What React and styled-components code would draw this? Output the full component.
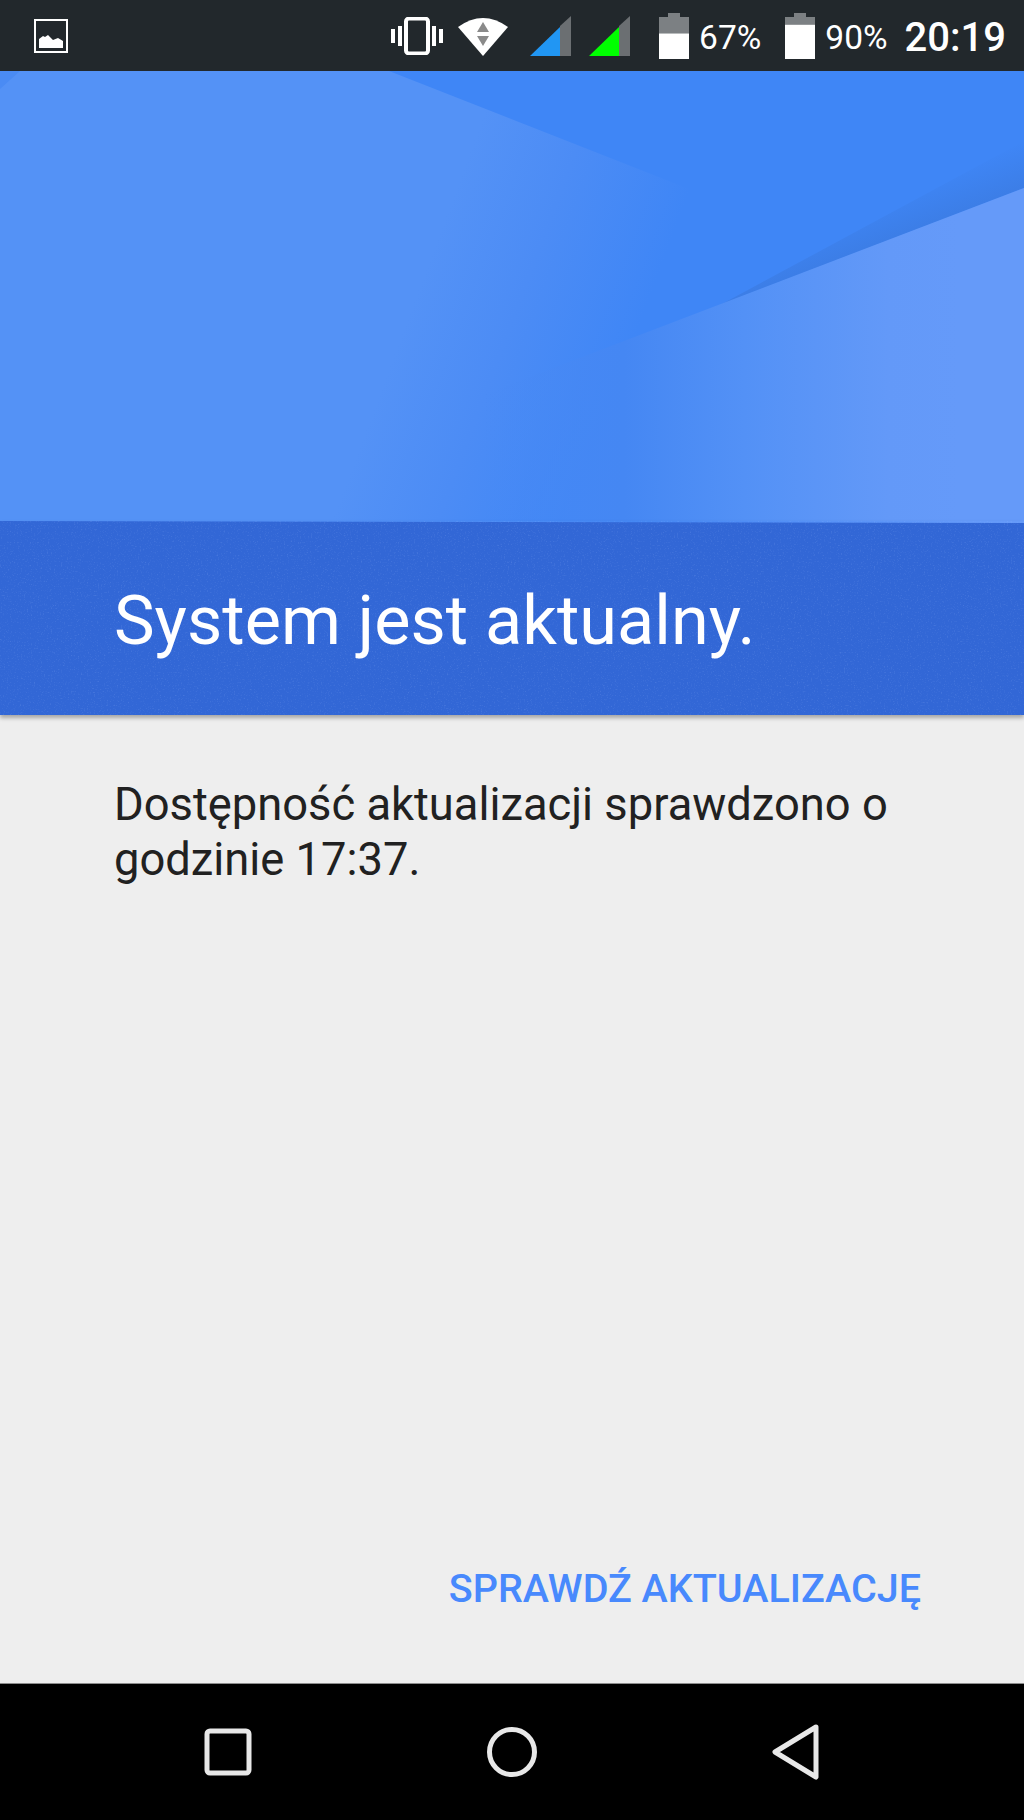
import React from "react";
import styled, { createGlobalStyle } from "styled-components";

const GlobalStyle = createGlobalStyle`
  html, body {
    margin: 0;
    padding: 0;
    background: #eeeeee;
  }
  #root {
    height: 1820px;
  }
`;

const App = () => {
  return (
    <Page>
      <GlobalStyle />
      <StatusBar>
        <PictureIcon />
        <StatusRight>
          <VibrateIcon />
          <WifiIcon />
          <SignalIcon color="#2196f3" $left={22} />
          <SignalIcon color="#00ff00" $left={18} />
          <BatteryIcon level={67} $left={29} />
          <Percent>67%</Percent>
          <BatteryIcon level={90} $left={24} />
          <Percent>90%</Percent>
          <Clock>20:19</Clock>
        </StatusRight>
      </StatusBar>

      <Hero>
        <HeroArt />
      </Hero>

      <Banner>
        <Grain />
        <Title>System jest aktualny.</Title>
      </Banner>

      <Content>
        <Message>
          Dostępność aktualizacji sprawdzono o
          <br />
          godzinie 17:37.
        </Message>
        <Actions>
          <CheckButton>SPRAWDŹ AKTUALIZACJĘ</CheckButton>
        </Actions>
      </Content>

      <NavBar>
        <NavIcon viewBox="0 0 50 56" $first>
          <rect x="4" y="7" width="42" height="42" rx="3" />
        </NavIcon>
        <NavIcon viewBox="0 0 50 56">
          <circle cx="25" cy="28" r="22.5" />
        </NavIcon>
        <NavIcon viewBox="0 0 50 56">
          <path d="M45 3 L4 28 L45 53 Z" />
        </NavIcon>
      </NavBar>
    </Page>
  );
};

export default App;

const PictureIcon = () => (
  <PictureSvg viewBox="0 0 34 34">
    <rect x="1" y="1" width="32" height="32" fill="none" stroke="#fff" strokeWidth="2" />
    <path d="M5 29 V20 L9 17 L11 18 L14 16 L19 21 L24 19 L29 22 V29 Z" fill="#fff" />
  </PictureSvg>
);

const VibrateIcon = () => (
  <VibrateSvg viewBox="0 0 52 38">
    <rect x="15" y="1.5" width="22" height="35" rx="3" fill="none" stroke="#fff" strokeWidth="4" />
    <rect x="7" y="9" width="4" height="20" fill="#fff" />
    <rect x="41" y="9" width="4" height="20" fill="#fff" />
    <rect x="0" y="12" width="4" height="14" fill="#fff" />
    <rect x="48" y="12" width="4" height="14" fill="#fff" />
  </VibrateSvg>
);

const WifiIcon = () => (
  <WifiSvg viewBox="0 0 50 40">
    <path d="M0 11 Q25 -7 50 11 L25 40 Z" fill="#fff" />
    <path d="M25 6 L31 16 H19 Z" fill="#8a8a8a" />
    <path d="M25 30 L31 20 H19 Z" fill="#8a8a8a" />
  </WifiSvg>
);

const SignalIcon = ({ color, $left }) => (
  <SignalSvg viewBox="0 0 41 40" $left={$left}>
    <path d="M41 0 V40 H30 V10 Z" fill="#6b6f72" />
    <path d="M0 40 L30 11 V40 Z" fill={color} />
  </SignalSvg>
);

const BatteryIcon = ({ level, $left }) => {
  const empty = 8 + (38 * (100 - level)) / 100;
  return (
    <BatterySvg viewBox="0 0 30 46" $left={$left}>
      <path d="M9 0 H21 V4 H30 V46 H0 V4 H9 Z" fill="#7c8083" />
      <rect x="0" y={empty} width="30" height={46 - empty} fill="#fff" />
    </BatterySvg>
  );
};

const HeroArt = () => (
  <HeroSvg viewBox="0 0 1024 450" preserveAspectRatio="none">
    <defs>
      <linearGradient id="leftShade" gradientUnits="userSpaceOnUse" x1="500" y1="0" x2="706" y2="77">
        <stop offset="0" stopColor="#5492f6" />
        <stop offset="0.45" stopColor="#4c8cf5" />
        <stop offset="1" stopColor="#3f86f6" />
      </linearGradient>
      <linearGradient id="rightShade" gradientUnits="userSpaceOnUse" x1="480" y1="0" x2="960" y2="0">
        <stop offset="0" stopColor="#4a8af4" stopOpacity="0" />
        <stop offset="0.3" stopColor="#4587f3" />
        <stop offset="0.55" stopColor="#5391f6" />
        <stop offset="0.85" stopColor="#6399f8" />
        <stop offset="1" stopColor="#659af9" />
      </linearGradient>
      <linearGradient id="edgeShade" gradientUnits="userSpaceOnUse" x1="803" y1="202" x2="787" y2="160">
        <stop offset="0" stopColor="#3a78dc" stopOpacity="0.6" />
        <stop offset="1" stopColor="#3a78dc" stopOpacity="0" />
      </linearGradient>
    </defs>
    <rect width="1024" height="450" fill="#3f86f6" />
    <path d="M0 0 H389 L730 134 L640 260 L600 450 H0 Z" fill="url(#leftShade)" />
    <path d="M0 0 H20 L0 18 Z" fill="#4a8bf4" />
    <path d="M1024 117 L720 234 L1024 70 Z" fill="url(#edgeShade)" />
    <path d="M1024 117 V450 H480 V325 L582 286 Z" fill="url(#rightShade)" />
  </HeroSvg>
);

const Grain = () => (
  <GrainSvg>
    <filter id="speckle">
      <feTurbulence type="fractalNoise" baseFrequency="0.7" numOctaves="2" seed="4" />
      <feColorMatrix values="0 0 0 0 0.45  0 0 0 0 0.6  0 0 0 0 1  0 0 0 1.6 -0.9" />
    </filter>
    <rect width="100%" height="100%" filter="url(#speckle)" opacity="0.3" />
  </GrainSvg>
);

const Page = styled.div`
  display: flex;
  flex-direction: column;
  width: 1024px;
  height: 1820px;
  overflow: hidden;
  font-family: Roboto, "Liberation Sans", sans-serif;
  background: #eeeeee;
`;

const StatusBar = styled.header`
  display: flex;
  align-items: center;
  justify-content: space-between;
  height: 71px;
  flex: none;
  padding: 0 18px 0 34px;
  box-sizing: border-box;
  background: #22282c;
  color: #fff;
`;

const StatusRight = styled.div`
  display: flex;
  align-items: center;
`;

const PictureSvg = styled.svg`
  width: 34px;
  height: 34px;
  display: block;
  margin-top: 1px;
`;

const VibrateSvg = styled.svg`
  width: 52px;
  height: 38px;
  display: block;
`;

const WifiSvg = styled.svg`
  width: 50px;
  height: 40px;
  display: block;
  margin-left: 15px;
`;

const SignalSvg = styled.svg`
  width: 41px;
  height: 40px;
  display: block;
  margin-left: ${(p) => p.$left}px;
  margin-top: 1px;
`;

const BatterySvg = styled.svg`
  width: 30px;
  height: 46px;
  display: block;
  margin-left: ${(p) => p.$left}px;
`;

const Percent = styled.span`
  font-size: 33.5px;
  margin-left: 10px;
  line-height: 40px;
  margin-top: 4px;
`;

const Clock = styled.span`
  font-size: 40px;
  font-weight: 500;
  margin-left: 17px;
  line-height: 40px;
  margin-top: 4px;
`;

const Hero = styled.div`
  height: 450px;
  flex: none;
  background: #5492f6;
`;

const HeroSvg = styled.svg`
  display: block;
  width: 1024px;
  height: 450px;
`;

const Banner = styled.section`
  position: relative;
  height: 194px;
  flex: none;
  display: flex;
  align-items: center;
  padding: 6px 114px 0;
  box-sizing: border-box;
  background: #3267d6;
  box-shadow: 0 3px 4px rgba(0, 0, 0, 0.3);
  z-index: 1;

  /* the hero's lower edge runs slightly downhill in the photo */
  &::before {
    content: "";
    position: absolute;
    top: 0;
    left: 0;
    width: 100%;
    height: 2px;
    background: linear-gradient(90deg, #5492f6 30%, #4587f3 62%, #659af9 95%);
    clip-path: polygon(0 0, 100% 0, 100% 100%);
  }
`;

const GrainSvg = styled.svg`
  position: absolute;
  inset: 0;
  width: 100%;
  height: 100%;
`;

const Title = styled.h1`
  position: relative;
  margin: 0;
  font-size: 68.4px;
  font-weight: 400;
  color: #fff;
  white-space: nowrap;
`;

const Content = styled.main`
  flex: 1;
  display: flex;
  flex-direction: column;
  justify-content: space-between;
  padding: 62px 114px 0;
  box-sizing: border-box;
  background: #eeeeee;
`;

const Message = styled.p`
  margin: 0;
  font-size: 45.3px;
  line-height: 55px;
  color: #212121;
`;

const Actions = styled.div`
  display: flex;
  justify-content: flex-end;
  margin-right: -11px;
  padding-bottom: 71px;
`;

const CheckButton = styled.button`
  border: none;
  background: none;
  padding: 0;
  font-family: inherit;
  font-size: 39.5px;
  font-weight: 500;
  line-height: 46px;
  color: #4889fd;
`;

const NavBar = styled.nav`
  height: 137px;
  flex: none;
  box-sizing: border-box;
  border-top: 1px solid #8c8c8c;
  background: #000;
  display: flex;
  align-items: center;
  padding-bottom: 1px;
`;

const NavIcon = styled.svg`
  width: 50px;
  height: 56px;
  flex: none;
  fill: none;
  stroke: #e8e8e8;
  stroke-width: 5;
  stroke-linejoin: round;
  margin-left: ${(p) => (p.$first ? 203 : 234)}px;
`;
